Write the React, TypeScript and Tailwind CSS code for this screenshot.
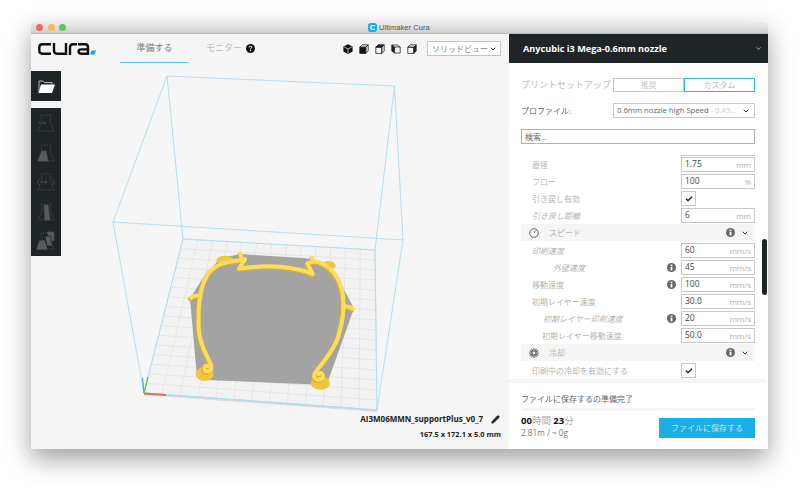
import { Check, ChevronDown, Pencil } from 'lucide-react';

const FONT = 'font-["Open_Sans","Noto_Sans_CJK_JP",sans-serif]';

type Row =
  | { kind: 'input'; label: string; indent: number; value: string; unit: string; italic?: boolean; info?: boolean }
  | { kind: 'check'; label: string; indent: number }
  | { kind: 'category'; label: string; icon: 'clock' | 'fan' };

const rows: Row[] = [
  { kind: 'input', label: '直径', indent: 11, value: '1.75', unit: 'mm' },
  { kind: 'input', label: 'フロー', indent: 11, value: '100', unit: '%' },
  { kind: 'check', label: '引き戻し有効', indent: 11 },
  { kind: 'input', label: '引き戻し距離', indent: 11, value: '6', unit: 'mm', italic: true },
  { kind: 'category', label: 'スピード', icon: 'clock' },
  { kind: 'input', label: '印刷速度', indent: 11, value: '60', unit: 'mm/s', italic: true },
  { kind: 'input', label: '外壁速度', indent: 32, value: '45', unit: 'mm/s', italic: true, info: true },
  { kind: 'input', label: '移動速度', indent: 11, value: '100', unit: 'mm/s', info: true },
  { kind: 'input', label: '初期レイヤー速度', indent: 11, value: '30.0', unit: 'mm/s' },
  { kind: 'input', label: '初期レイヤー印刷速度', indent: 22, value: '20', unit: 'mm/s', italic: true, info: true },
  { kind: 'input', label: '初期レイヤー移動速度', indent: 21, value: '50.0', unit: 'mm/s' },
  { kind: 'category', label: '冷却', icon: 'fan' },
  { kind: 'check', label: '印刷中の冷却を有効にする', indent: 11 },
];

function Info() {
  return (
    <svg className="w-[9px] h-[9px]" viewBox="0 0 10 10">
      <circle cx="5" cy="5" r="5" fill="#666" />
      <rect x="4" y="4.2" width="2" height="4" fill="#fff" />
      <rect x="4" y="1.8" width="2" height="1.6" fill="#fff" />
    </svg>
  );
}

function ClockIcon() {
  return (
    <svg className="w-[10px] h-[10px]" viewBox="0 0 10 10" fill="none" stroke="#555" strokeWidth="0.9">
      <circle cx="5" cy="5" r="4.3" />
      <path d="M5 5 6.8 2.6" />
    </svg>
  );
}

function FanIcon() {
  return (
    <svg className="w-[10px] h-[10px]" viewBox="0 0 10 10" stroke="#555" strokeWidth="1">
      {[0, 30, 60, 90, 120, 150, 180, 210, 240, 270, 300, 330].map(a => (
        <path key={a} d="M5 3.6V0" transform={`rotate(${a} 5 5)`} />
      ))}
    </svg>
  );
}

function CubeIcon({ fill }: { fill: 'front' | 'top' | 'left' | 'right' }) {
  if (fill === 'left') {
    return (
      <svg className="w-[10px] h-[10px]" viewBox="0 0 10 10" fill="none" stroke="#222" strokeWidth="0.8">
        <path d="M.8 1 3.6 3v6L.8 7z" fill="#222" />
        <path d="M.8 1H6.5L9.2 3v6H3.6M3.6 3H9.2" />
      </svg>
    );
  }
  return (
    <svg className="w-[10px] h-[10px]" viewBox="0 0 10 10" fill="none" stroke="#222" strokeWidth="0.8">
      <path d="M.8 3.2H6.8V9.4H.8z" fill={fill === 'front' ? '#111' : 'none'} />
      <path d="M.8 3.2 3.2.8H9.2L6.8 3.2z" fill={fill === 'top' ? '#222' : 'none'} />
      <path d="M6.8 3.2 9.2.8V7L6.8 9.4z" fill={fill === 'right' ? '#222' : 'none'} />
    </svg>
  );
}

function SolidCube() {
  return (
    <svg className="w-[10px] h-[10px]" viewBox="0 0 10 10">
      <path d="M5 .2 9.6 2.6V7.6L5 10 .4 7.6V2.6z" fill="#111" />
      <path d="M1.2 3 5 5l3.8-2M5 5v4.4" fill="none" stroke="#f5f5f5" strokeWidth="0.7" />
    </svg>
  );
}

// dashed vase with a solid part, the variant says where the solid part sits
function ToolIcon({ variant }: { variant: number }) {
  const outline = 'M5 2H15L14 8 18 18H2L6 8z';
  return (
    <svg className="w-[20px] h-[20px]" viewBox="0 0 20 20" fill="none" stroke="#555" strokeWidth="0.7">
      <path d={outline} strokeDasharray="1.2 0.8" />
      {variant === 0 && <path d="M2 10H10M8 8.5 10 10 8 11.5" />}
      {variant === 1 && <path d="M6 8H10L12 18H2z" fill="#5a5a5a" />}
      {variant === 2 && (
        <>
          <path d="M5 10H11M9 8.5 11 10 9 11.5" />
          <path d="M4 7 1 10 4 13M16 7 19 10 16 13" />
        </>
      )}
      {variant === 3 && <path d="M8 3H12L14 18H9z" fill="#5a5a5a" />}
      {variant === 4 && (
        <>
          <path d="M11 1H18L18 9 15 11 13 7z" fill="#5a5a5a" />
          <path d="M9 5H15L15 11 17 15H11z" fill="#5a5a5a" stroke="#1f2427" />
          <path d="M3 9H9L12 19H0z" fill="#5a5a5a" stroke="#1f2427" />
        </>
      )}
    </svg>
  );
}

function SettingRow({ row }: { row: Row }) {
  if (row.kind === 'category') {
    return (
      <div className="h-[17px] mb-px bg-[#f5f5f5] flex items-center pl-[8px] pr-[6px]">
        {row.icon === 'clock' ? <ClockIcon /> : <FanIcon />}
        <span className="ml-[10px] text-[8px] text-[#b8b8b8]">{row.label}</span>
        <span className="ml-auto mr-[6px]"><Info /></span>
        <ChevronDown className="w-[8px] h-[8px] text-[#333]" strokeWidth={3} />
      </div>
    );
  }
  return (
    <div className="h-[17px] flex items-center">
      <span
        className={`text-[8px] text-[#b4b4b4] ${row.kind === 'input' && row.italic ? 'italic' : ''}`}
        style={{ marginLeft: row.indent }}
      >
        {row.label}
      </span>
      {row.kind === 'input' ? (
        <>
          {row.info && <span className="ml-auto mr-[5px] flex"><Info /></span>}
          <div className={`${row.info ? '' : 'ml-auto'} w-[74px] h-[15px] border border-[#c8c8c8] bg-white flex items-center justify-between pl-[3px] pr-[3px]`}>
            <span className="text-[8.5px] text-[#444]">{row.value}</span>
            <span className="text-[8px] text-[#b0b0b0]">{row.unit}</span>
          </div>
        </>
      ) : (
        <div className="ml-[auto] mr-[59px] w-[15px] h-[15px] border border-[#c8c8c8] bg-white flex items-center justify-center">
          <Check className="w-[8px] h-[8px] text-[#222]" strokeWidth={4} />
        </div>
      )}
    </div>
  );
}

// build plate corners, in page pixels
const FL = [183, 239];
const FR = [375, 250];
const BR = [377, 410];
const BL = [144, 393];

function plate(u: number, v: number) {
  const x = (FL[0] * (1 - u) + FR[0] * u) * (1 - v) + (BL[0] * (1 - u) + BR[0] * u) * v;
  const y = (FL[1] * (1 - u) + FR[1] * u) * (1 - v) + (BL[1] * (1 - u) + BR[1] * u) * v;
  return `${x} ${y}`;
}

const COLS = 13;
const LINES = 16;

// model outline, in the units of a 3x crop
const ARCH = [
  'M183 203C190 197 198 196 207 197',
  'M644 229C652 229 662 231 668 236',
  'M332 72 336 88',
  'M546 84 549 95',
  'M345 88C310 96 270 92 240 125 212 158 204 220 206 290 208 345 232 375 243 405 248 422 232 432 224 420 220 412 226 405 232 408',
  'M345 88 327 116C380 108 470 100 548 132L532 100 552 94',
  'M552 94C590 100 620 125 636 180 646 225 640 270 625 320 610 370 572 400 554 432 548 450 570 456 578 442 582 432 572 426 566 432',
];

function Scene() {
  const blue = '#aadcf1';
  return (
    <svg className="absolute inset-0" width="478" height="415" viewBox="31 34 478 415" fill="none">
      <path d="M144 393 377 410 377 412 144 395z" fill="#dcdcdc" />
      <path d={`M${FL} L${FR} L${BR} L${BL}z`} fill="#f2f2f2" />
      {Array.from({ length: COLS + 1 }, (_, i) => (
        <path key={i} d={`M${plate(i / COLS, 0)} L${plate(i / COLS, 1)}`} stroke="#e2e2e2" strokeWidth="0.8" />
      ))}
      {Array.from({ length: LINES + 1 }, (_, i) => (
        <path key={i} d={`M${plate(0, i / LINES)} L${plate(1, i / LINES)}`} stroke="#e2e2e2" strokeWidth="0.8" />
      ))}

      <path d="M167 76 394.5 86 403 240 113 222z" stroke={blue} strokeWidth="0.9" />
      <path d="M167 76 183 239 375 250 394.5 86M375 250 377 410 144 393 183 239M113 222 144 393 377 410 403 240" stroke={blue} strokeWidth="0.9" />

      <g transform="translate(130 230) scale(0.3333)">
        <path d="M270 85 330 72 530 85 610 120 672 235 590 465 230 450 200 430 180 205 215 150z" fill="#a3a3a3" />
        <g fill="#f0c63e">
          <ellipse cx="285" cy="90" rx="26" ry="13" />
          <ellipse cx="595" cy="106" rx="22" ry="13" />
          <ellipse cx="224" cy="432" rx="27" ry="21" />
          <ellipse cx="571" cy="459" rx="29" ry="20" />
        </g>
        <g stroke="#d8ae32" strokeWidth="14" strokeLinecap="round" strokeLinejoin="round" transform="translate(-2 3)">
          {ARCH.map(d => <path key={d} d={d} />)}
        </g>
        <g stroke="#fbdc5c" strokeWidth="12" strokeLinecap="round" strokeLinejoin="round">
          {ARCH.map(d => <path key={d} d={d} />)}
        </g>
      </g>

      <path d="M144 393 142.5 378" stroke="#3fa7e0" strokeWidth="1.2" />
      <path d="M144 393 148 377" stroke="#58c04a" strokeWidth="1.2" />
      <path d="M144 393.5 166 395" stroke="#e0705e" strokeWidth="2" />
    </svg>
  );
}

function Logo() {
  return (
    <svg width="58" height="12" viewBox="0 0 58 12" fill="none" stroke="#111" strokeWidth="2.4">
      <path d="M13 1.3H4.5Q1.3 1.3 1.3 4.5V7.5Q1.3 10.7 4.5 10.7H13" />
      <path d="M16 0V7.5Q16 10.7 19.2 10.7H28V0" />
      <path d="M32 12V4.5Q32 1.3 35.2 1.3H39" />
      <path d="M40 1.3H47Q50 1.3 50 4.5V12M50 6.4H43.5Q40.6 6.4 40.6 8.5 40.6 10.7 43.5 10.7H50" />
      <path d="M53.5 7.5H58L56.6 11.6H52z" fill="#0ca7e6" stroke="none" />
    </svg>
  );
}

export default function App() {
  return (
    <div className={`h-[491px] w-[800px] bg-white pt-[22px] pl-[31px] overflow-hidden ${FONT}`}>
      <div className="w-[737px] h-[427px] rounded-t-[5px] overflow-hidden flex flex-col bg-white shadow-[0_10px_26px_rgba(0,0,0,0.38)]">
        {/* Title bar */}
        <div className="h-[12px] shrink-0 bg-gradient-to-b from-[#ececec] to-[#cfcfcf] border-b border-[#bdbdbd] flex items-center relative">
          <div className="flex gap-[4.5px] pl-[5px]">
            <span className="w-[7px] h-[7px] rounded-full bg-[#ed6a5e]" />
            <span className="w-[7px] h-[7px] rounded-full bg-[#f4bf4f]" />
            <span className="w-[7px] h-[7px] rounded-full bg-[#61c554]" />
          </div>
          <div className="absolute left-[337px] top-0 h-full flex items-center gap-[2px]">
            <svg className="w-[9px] h-[9px]" viewBox="0 0 10 10" fill="none">
              <rect width="10" height="10" rx="3" fill="#1aaee6" />
              <path d="M7.5 3H5Q3 3 3 5T5 7H7.5" stroke="#fff" strokeWidth="1.4" />
            </svg>
            <span className="font-['Liberation_Sans',sans-serif] text-[7.6px] leading-none text-[#555]">Ultimaker Cura</span>
          </div>
        </div>

        <div className="flex-1 flex min-h-0">
          {/* Viewport */}
          <div className="flex-1 relative bg-[#f5f5f5] flex flex-col">
            <Scene />
            <div className="relative h-[29px] shrink-0 flex">
              <div className="pl-[7px] pt-[9px]"><Logo /></div>
              <div className="ml-[24px] w-[69px] h-[29px] border-b-[1.5px] border-[#5ac4f2] flex items-center justify-center">
                <span className="text-[9px] text-[#7c7c7c] pb-[1px]">準備する</span>
              </div>
              <div className="ml-[17px] flex items-center gap-[4px] h-[29px]">
                <span className="text-[9px] text-[#bdbdbd] pb-[1px]">モニター</span>
                <svg className="w-[9px] h-[9px]" viewBox="0 0 10 10">
                  <circle cx="5" cy="5" r="5" fill="#111" />
                  <path d="M3.5 3.9Q3.7 2.5 5 2.5 6.5 2.5 6.5 3.7 6.5 4.5 5 5.3V6" stroke="#fff" strokeWidth="1.1" fill="none" />
                  <rect x="4.4" y="6.8" width="1.2" height="1.2" fill="#fff" />
                </svg>
              </div>
              <div className="ml-auto flex items-center gap-[6px] h-[29px]">
                <SolidCube />
                <CubeIcon fill="front" />
                <CubeIcon fill="top" />
                <CubeIcon fill="left" />
                <CubeIcon fill="right" />
                <div className="ml-[4px] mr-[8px] w-[74px] h-[15px] border border-[#c4c4c4] bg-white flex items-center justify-between pl-[4px] pr-[3px]">
                  <span className="text-[8px] text-[#888] whitespace-nowrap">ソリッドビュー</span>
                  <ChevronDown className="w-[8px] h-[8px] text-[#333]" strokeWidth={3} />
                </div>
              </div>
            </div>

            {/* Tool column */}
            <div className="relative w-[30px] mt-[8px] flex flex-col gap-[7px]">
              <div className="h-[30px] bg-[#1f2427] flex items-center justify-center">
                <svg width="18" height="13" viewBox="0 0 18 13">
                  <path d="M2 12V1H6L7.5 2.5H15V4" fill="none" stroke="#ddd" strokeWidth="0.8" />
                  <path d="M4 4.5H18L15 13H1.5z" fill="#fff" />
                </svg>
              </div>
              <div className="h-[148px] bg-[#1f2427] flex flex-col items-center justify-between py-[5px]">
                {[0, 1, 2, 3, 4].map(i => <ToolIcon key={i} variant={i} />)}
              </div>
            </div>

            {/* Model name and size */}
            <div className="relative mt-auto pr-[8px] pb-[9px] flex flex-col items-end text-[#222] font-bold">
              <div className="flex items-center gap-[8px] mr-[1px]">
                <span className="text-[8px] leading-[12px]">AI3M06MMN_supportPlus_v0_7</span>
                <Pencil className="w-[9px] h-[9px] text-[#222]" fill="#222" />
              </div>
              <span className="mt-[3px] text-[7.4px] leading-[12px]">167.5 x 172.1 x 5.0 mm</span>
            </div>
          </div>

          {/* Settings panel */}
          <div className="w-[259px] shrink-0 bg-white flex flex-col relative">
            <div className="h-[29px] shrink-0 bg-[#1f2427] flex items-center justify-between pl-[14px] pr-[6px]">
              <span className="text-[9.15px] font-bold text-white">Anycubic i3 Mega-0.6mm nozzle</span>
              <ChevronDown className="w-[7px] h-[7px] text-[#bbb]" strokeWidth={3} />
            </div>

            <div className="pl-[12px] pr-[13px]">
              <div className="mt-[15px] flex items-center h-[14px]">
                <span className="w-[92px] text-[9px] text-[#bdbdbd]">プリントセットアップ</span>
                <div className="w-[71px] h-[14px] border border-[#c8c8c8] flex items-center justify-center text-[8px] text-[#c4c4c4]">推奨</div>
                <div className="w-[71px] h-[14px] border-[1.5px] border-[#2bb1ea] flex items-center justify-center text-[8px] text-[#bdbdbd]">カスタム</div>
              </div>
              <div className="mt-[11px] flex items-center h-[15px]">
                <span className="w-[92px] text-[8px] text-[#666]">プロファイル:</span>
                <div className="w-[142px] h-[15px] border border-[#c8c8c8] flex items-center justify-between pl-[3px] pr-[4px]">
                  <span className="text-[7.7px] text-[#666] whitespace-nowrap">0.6mm nozzle high Speed<span className="text-[#ccc]"> - 0.45...</span></span>
                  <ChevronDown className="w-[8px] h-[8px] text-[#333]" strokeWidth={3} />
                </div>
              </div>
              <div className="mt-[11px] h-[15px] border border-[#b0b0b0] flex items-center pl-[3px]">
                <span className="text-[8px] text-[#666]">検索...</span>
              </div>

              <div className="mt-[11px] h-[224px] overflow-hidden">
                <div className="ml-[160px] h-px bg-[#c8c8c8]" />
                {rows.map(r => <SettingRow key={r.label} row={r} />)}
              </div>
            </div>

            {/* Scrollbar sits on the panel edge */}
            <div className="absolute left-[253px] top-[205px] w-[5px] h-[56px] rounded-full bg-[#1f2427]" />

            <div className="h-[4px] mr-[2px] bg-[#f5f5f5]" />
            <div className="pl-[12px] pr-[13px] flex-1 flex flex-col">
              <div className="h-[25px] pt-[7px] flex items-center">
                <span className="text-[8px] text-[#666]">ファイルに保存するの準備完了</span>
              </div>
              <div className="h-[3px] bg-[#f5f5f5]" />
              <div className="mt-[3px] flex justify-between items-start">
                <div className="flex flex-col">
                  <div className="text-[9.5px] leading-[13px] text-[#aaa]">
                    <span className="font-bold text-[#111]">00</span>時間 <span className="font-bold text-[#111]">23</span>分
                  </div>
                  <span className="text-[8.2px] leading-[11px] text-[#777]">2.81m / ~ 0g</span>
                </div>
                <div className="mt-[4px] w-[96px] h-[20px] bg-[#1aaee6] flex items-center justify-center text-[8px] text-[#c4e9f8]">
                  ファイルに保存する
                </div>
              </div>
            </div>
          </div>
        </div>
      </div>
    </div>
  );
}
